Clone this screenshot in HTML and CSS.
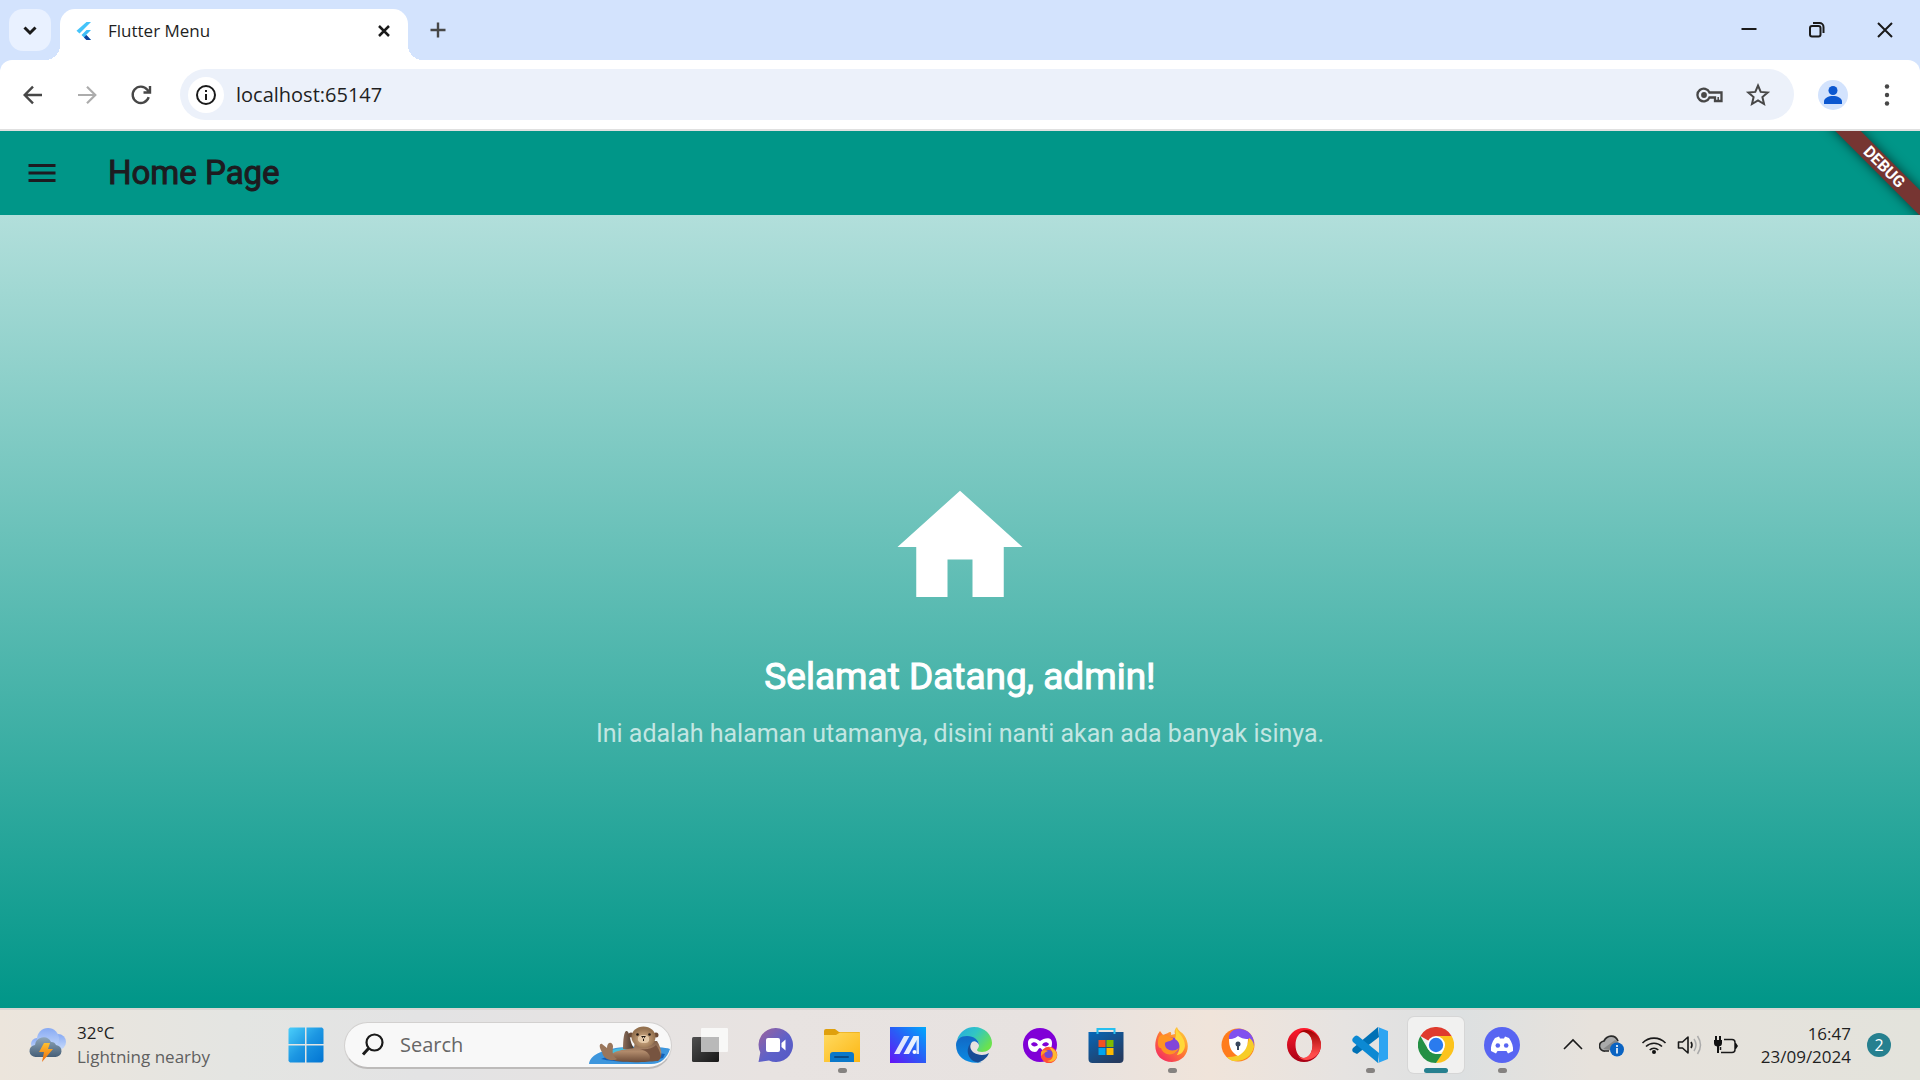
FILE: index.html
```html
<!DOCTYPE html>
<html lang="id">
<head>
<meta charset="utf-8">
<meta name="viewport" content="width=device-width, initial-scale=1">
<title>Flutter Menu</title>
<link rel="stylesheet" href="styles.css">
</head>
<body>
<header class="browser">
  <div class="tabstrip">
    <button class="tab-search" aria-label="Search tabs"><svg width="24" height="24" viewBox="0 0 24 24" class="line"><path d="M6.500 9.500l5.500 5.500 5.500-5.500" stroke-width="3"/></svg></button>
    <div class="tab">
      <svg width="18" height="20" viewBox="0 0 18 20"><path d="M11.500 1H16L4.500 12.500 1.500 9.800z" fill="#45c4fa"/><path d="M11.500 9H16l-5 5 5 5h-4.500l-5-5z" fill="#3fbcf5"/><path d="M9 16.500l2.500-2.500L16 19h-4.500z" fill="#0d3f9b"/></svg>
      <span class="tab-title">Flutter Menu</span>
      <button class="tab-close" aria-label="Close tab"><svg width="18" height="18" viewBox="0 0 18 18" class="line"><path d="M4 4l10 10M14 4L4 14" stroke-width="2.500"/></svg></button>
    </div>
    <button class="new-tab" aria-label="New tab"><svg width="20" height="20" viewBox="0 0 20 20" class="line soft"><path d="M10 2.500v15M2.500 10h15" stroke-width="2.400"/></svg></button>
    <div class="window-controls">
      <button aria-label="Minimize"><svg width="20" height="20" viewBox="0 0 20 20" class="line"><path d="M2.500 9h15" stroke-width="2"/></svg></button>
      <button aria-label="Restore"><svg width="20" height="20" viewBox="0 0 20 20" class="line"><rect x="3" y="6" width="10.500" height="10.500" rx="2" stroke-width="2"/><path d="M6 3h6.500a4 4 0 0 1 4 4v6" stroke-width="2"/></svg></button>
      <button aria-label="Close"><svg width="20" height="20" viewBox="0 0 20 20" class="line"><path d="M3 3l14 14M17 3L3 17" stroke-width="2"/></svg></button>
    </div>
  </div>
  <div class="toolbar">
    <button class="nav" aria-label="Back"><svg width="24" height="24" viewBox="0 0 24 24" class="line soft"><path d="M21 12H4.500M12 3.700L3.700 12l8.300 8.300" stroke-width="2.400"/></svg></button>
    <button class="nav" aria-label="Forward" disabled><svg width="24" height="24" viewBox="0 0 24 24" class="line faint"><path d="M3 12h16.500M12 3.700l8.300 8.300-8.300 8.300" stroke-width="2.200"/></svg></button>
    <button class="nav" aria-label="Reload"><svg width="24" height="24" viewBox="0 0 24 24" class="line soft"><path d="M19.700 14.200A8.200 8.200 0 1 1 18.300 6.700l2 2.500M21 3v6.500h-6.500" stroke-width="2.400"/></svg></button>
    <div class="omnibox">
      <button class="site-info" aria-label="Site information"><svg width="22" height="22" viewBox="0 0 22 22" class="line"><circle cx="11" cy="11" r="9" stroke-width="2"/><path d="M11 10v6M11 6v2" stroke-width="2"/></svg></button>
      <input class="address" type="text" value="localhost:65147" aria-label="Address">
      <button class="omni-btn" aria-label="Passwords"><svg width="30" height="20" viewBox="0 0 30 20" class="line soft"><path d="M14.500 7.500A6.300 6.300 0 1 0 14.500 12.500H20V16h6.500V7.500z" stroke-width="2.300"/><path d="M23.200 15v-3" stroke-width="1.500"/><circle cx="9" cy="10" r="2.900" class="dot"/></svg></button>
      <button class="omni-btn" aria-label="Bookmark"><svg width="26" height="26" viewBox="0 0 26 26" class="line soft"><path d="M13 3.500l2.700 6.400 7 .6-5.300 4.600 1.600 6.900-6-3.700-6 3.700 1.600-6.900L3.300 10.500l7-.6z" stroke-width="2" stroke-linejoin="miter"/></svg></button>
    </div>
    <button class="avatar" aria-label="Profile"><svg width="30" height="30" viewBox="0 0 30 30"><circle cx="15" cy="15" r="15" fill="#d3e3fd"/><circle cx="15" cy="10.500" r="4.500" fill="#0b57d0"/><path d="M6 24v-2.500c0-3.500 4.500-5.500 9-5.500s9 2 9 5.500V24z" fill="#0b57d0"/></svg></button>
    <button class="menu" aria-label="Browser menu"><svg width="24" height="24" viewBox="0 0 24 24" fill="#474747"><circle cx="12" cy="3.500" r="2.200"/><circle cx="12" cy="12" r="2.200"/><circle cx="12" cy="20.500" r="2.200"/></svg></button>
  </div>
</header>

<div class="appbar">
  <button class="drawer" aria-label="Open navigation menu"><svg width="36" height="36" viewBox="0 0 24 24" fill="#1d1b20"><path d="M3 18h18v-2H3zM3 13h18v-2H3zM3 6v2h18V6z"/></svg></button>
  <h1 class="appbar-title">Home Page</h1>
  <div class="banner"><span class="ribbon">DEBUG</span></div>
</div>
<main class="home">
  <svg class="home-icon" width="150" height="150" viewBox="0 0 24 24" fill="#fff"><path d="M10 20v-6h4v6h5v-8h3L12 3 2 12h3v8z"/></svg>
  <h2 class="welcome">Selamat Datang, admin!</h2>
  <p class="intro">Ini adalah halaman utamanya, disini nanti akan ada banyak isinya.</p>
</main>

<footer class="taskbar">
  <button class="weather">
    <svg width="38" height="36" viewBox="0 0 38 36">
      <defs><linearGradient id="cl" x2="0" y2="1"><stop stop-color="#88aaf3"/><stop offset="1" stop-color="#c9dcfb"/></linearGradient><linearGradient id="cd" x2="0" y2="1"><stop stop-color="#8fa6b8"/><stop offset="1" stop-color="#465f78"/></linearGradient><linearGradient id="bo" x2="0" y2="1"><stop stop-color="#ffc02e"/><stop offset="1" stop-color="#ee6a0c"/></linearGradient></defs>
      <circle cx="8" cy="17" r="6" fill="url(#cl)"/><circle cx="29" cy="15" r="8" fill="url(#cl)"/><circle cx="19" cy="12" r="11" fill="url(#cl)"/>
      <path d="M7 30a6 6 0 0 1-1-12 8.500 8.500 0 0 1 16-3 5 5 0 0 1 5 3 6 6 0 0 1-1 12z" fill="url(#cd)"/>
      <path d="M15 16h6l-2 6h5L13 35l2-10h-5z" fill="url(#bo)"/>
    </svg>
    <span class="weather-text"><span>32°C</span><span class="muted">Lightning nearby</span></span>
  </button>
  <nav class="apps">
    <button class="app" aria-label="Start"><svg width="36" height="36" viewBox="0 0 36 36"><defs><linearGradient id="wn" gradientUnits="userSpaceOnUse" x1="0" y1="0" x2="36" y2="36"><stop stop-color="#4cd0fb"/><stop offset=".5" stop-color="#1c96e2"/><stop offset="1" stop-color="#0173d2"/></linearGradient></defs><path d="M2 .5h15v16.500H.5V2zM18.500.5H34L35.500 2v15h-17zM.5 18.500H17v17H2L.5 34zM18.500 18.500h17V34L34 35.500H18.500z" fill="url(#wn)"/></svg></button>
    <label class="search">
      <svg width="24" height="24" viewBox="0 0 24 24" class="line"><circle cx="13.500" cy="9.500" r="8" stroke-width="2.200"/><path d="M7.500 15.500L2 21.500" stroke-width="3"/></svg>
      <input type="text" placeholder="Search" aria-label="Search">
      <svg width="82" height="40" viewBox="0 0 82 40">
        <defs><linearGradient id="fur" x2="0" y2="1"><stop stop-color="#7d5e49"/><stop offset=".5" stop-color="#b08a6b"/><stop offset="1" stop-color="#6d4c38"/></linearGradient><radialGradient id="hd" cy=".6"><stop stop-color="#d9b48e"/><stop offset="1" stop-color="#94714f"/></radialGradient><linearGradient id="arm"><stop stop-color="#8d6d58"/><stop offset="1" stop-color="#40332c"/></linearGradient></defs>
        <path d="M0 39C1 29 17 23 38 22c20-1 36 0 43 2-3 9-9 15-19 15z" fill="#3d96dd"/><path d="M16 27c10-4 22-5 34-4l-4 8H16z" fill="#46bfe0"/><path d="M12 34c15 4 48 3 62-1l2-4-14-2H30z" fill="#1260b8"/>
        <path d="M34 24c0-9 1-17 3-18 3-1 4 7 5 11s3 5 3 7l-3 1z" fill="url(#arm)"/>
        <path d="M45 23c-6 1-14 2-19 4-5 2-5 7 1 9 14 2 33 1 40 0 8-2 6-12 1-20H46z" fill="url(#fur)"/>
        <path d="M26 35c-8 1-12-3-13-8-3-4-3-9 0-8l5 4c0-6 5-7 6-2 0 4-2 9 4 13z" fill="#9a765b"/>
        <path d="M51 24c8 2 12 7 9 12h9c5-3 2-11-2-16-4 4-10 5-16 4z" fill="#775440"/>
        <circle cx="42" cy="10" r="2.500" fill="#6d4c38"/><circle cx="67" cy="10" r="2.500" fill="#6d4c38"/>
        <ellipse cx="54.500" cy="12" rx="12" ry="10.500" fill="url(#hd)"/><path d="M49 13c0-4 11-4 11 0 1 5-3 5-5.500 5S48 17 49 13z" fill="#e4c9a8"/><circle cx="48.500" cy="9.500" r="1.300" fill="#211812"/><circle cx="60.500" cy="9.500" r="1.300" fill="#211812"/><path d="M52 11h5l-2.500 3zM54 12v4h1v-4z" fill="#211812"/>
      </svg>
    </label>
    <button class="app" aria-label="Task view"><svg width="36" height="36" viewBox="0 0 36 36"><defs><linearGradient id="tk" x2="1" y2="1"><stop stop-color="#505050"/><stop offset="1" stop-color="#171717"/></linearGradient></defs><rect x="0" y="10" width="27" height="25" rx="1.500" fill="url(#tk)"/><rect x="9" y="1" width="27" height="24" rx="1" fill="#f9f9f9" fill-opacity=".9"/><path d="M9 10h18v15H9z" fill="#b9b9b9"/></svg></button>
    <button class="app" aria-label="Chat"><svg width="36" height="36" viewBox="0 0 36 36"><defs><linearGradient id="ch" x1="0" y1="0" x2="1" y2="1"><stop offset=".15" stop-color="#8d62a7"/><stop offset=".55" stop-color="#5d61c9"/><stop offset="1" stop-color="#5558c4"/></linearGradient></defs><path d="M18 1a17 17 0 1 1-7 32.500L.5 35l1.800-9.500A17 17 0 0 1 18 1z" fill="url(#ch)"/><rect x="8" y="11" width="14" height="14" rx="2" fill="#fff"/><path d="M23.500 16l4-3.500v11l-4-3.500z" fill="#fff"/></svg></button>
    <button class="app open" aria-label="File Explorer"><svg width="36" height="36" viewBox="0 0 36 36"><defs><linearGradient id="fo" x2="1" y2="1"><stop stop-color="#ffda61"/><stop offset="1" stop-color="#fcb714"/></linearGradient></defs><path d="M0 4a2 2 0 0 1 2-2h9l4 3h20a1 1 0 0 1 1 1v6H0z" fill="#dfa00d"/><path d="M0 8h12l4-2.500h20V35H0z" fill="url(#fo)"/><path d="M6 35v-7a3 3 0 0 1 3-3h18a3 3 0 0 1 3 3v7z" fill="#0a78ca"/><rect x="10" y="29" width="15" height="2" rx="1" fill="#084b87"/></svg></button>
    <button class="app" aria-label="MyASUS"><svg width="36" height="36" viewBox="0 0 36 36"><defs><linearGradient id="as" x1="0" y1="1" x2="1" y2="0"><stop stop-color="#6612f5"/><stop offset=".5" stop-color="#2a5cf6"/><stop offset="1" stop-color="#00a9fb"/></linearGradient></defs><path d="M0 0h36v36H0z" fill="url(#as)"/><g fill="#fff"><path d="M14 9h5.500L9.500 27H4z" opacity=".85"/><path d="M23.500 9H29L19 27h-5.500z" opacity=".9"/><path d="M26.500 12L29 9v18h-2.500z" opacity=".8"/><circle cx="24.500" cy="25" r="2"/></g></svg></button>
    <button class="app" aria-label="Edge"><svg width="36" height="36" viewBox="0 0 36 36"><defs><linearGradient id="e1" x2="1" y2=".6"><stop stop-color="#25a9e3"/><stop offset=".5" stop-color="#32c6c3"/><stop offset="1" stop-color="#6be24d"/></linearGradient><linearGradient id="e2" x2="0" y2="1"><stop stop-color="#1268c4"/><stop offset="1" stop-color="#0a8be3"/></linearGradient></defs><path d="M1 13C4 4 11 0 18 0c11 0 18 8 18 16 0 6-5 9-10 9-3 0-5-1-5-2 0-1 2-2 2-5 0-5-5-8-11-8-5 0-9 1-11 3z" fill="url(#e1)"/><path d="M0 18C0 12 5 9 11 9c7 0 12 4 12 9-2-4-5-4.500-7-3-5 4-3 17 10 20C14 38 0 32 0 18z" fill="url(#e2)"/><path d="M16 15c-3 3-3 12 10 13 3 0 5-1 7-2-2 5-6 8-11 9.500C12 34 8 22 16 15z" fill="#164d96"/></svg></button>
    <button class="app" aria-label="Firefox Private Browsing"><svg width="36" height="36" viewBox="0 0 36 36"><circle cx="18" cy="18" r="17" fill="#8000d7"/><path d="M6 16c0-7 8-5 12-2 4-3 12-5 12 2 0 6-3 9-7 9-3 0-3-4-5-4s-2 4-5 4c-4 0-7-3-7-9z" fill="#fff"/><path d="M9 17c2-3 6-2 7 1-2 2-6 2-7-1zM20 18c1-3 5-4 7-1-1 3-5 3-7 1z" fill="#8000d7"/><circle cx="27" cy="28" r="8.300" fill="#ff5038"/><path d="M27 20c4 1 8 4 8 8 0 6-6 8-10 6 7-1 8-7 2-14z" fill="#ffb82f"/><circle cx="26.500" cy="27" r="4" fill="#7349d6"/><path d="M19 25c3-3 5-1 7-1-3 1-5 3-7 5z" fill="#ff9b25"/></svg></button>
    <button class="app" aria-label="Microsoft Store"><svg width="36" height="36" viewBox="0 0 36 36"><defs><linearGradient id="st" x2=".7" y2="1"><stop stop-color="#0767b8"/><stop offset="1" stop-color="#253b60"/></linearGradient></defs><path d="M.5 5h35v27a4 4 0 0 1-4 4h-27a4 4 0 0 1-4-4z" fill="url(#st)"/><path d="M9.500 7V2h17v5" fill="none" stroke="#27bfef" stroke-width="2"/><path d="M10.500 13h7v7h-7z" fill="#f25022"/><path d="M18.500 13h7v7h-7z" fill="#7fba00"/><path d="M10.500 21h7v7h-7z" fill="#00a4ef"/><path d="M18.500 21h7v7h-7z" fill="#ffb900"/></svg></button>
    <button class="app open" aria-label="Firefox"><svg width="36" height="36" viewBox="0 0 36 36"><defs><linearGradient id="ff" x1="1" y1="0" x2=".2" y2="1"><stop stop-color="#ffe23e"/><stop offset=".5" stop-color="#ff7e30"/><stop offset="1" stop-color="#f42b62"/></linearGradient></defs><path d="M4 7l2-3 3 4 5-2c1-1 4-2 3 2l4-1c-1-3 0-5 2-7 1 4 5 5 7 8 8 11 3 26-12 27C4 35-3 22 4 7z" fill="url(#ff)"/><circle cx="18" cy="18.500" r="8" fill="#8245d8"/><path d="M5 10c4-5 8 0 14 1 1 3-6 3-8 5-1 7 8 10 14 5-3 8-15 9-18 0-3 1-4-6-2-11z" fill="#ff9322"/><path d="M22 1c2 5 9 9 9 18-1 7-6 9-8 9 5-8 2-14-2-16 2-5 0-8 1-11z" fill="#ffd83a"/></svg></button>
    <button class="app" aria-label="Secure Browser"><svg width="36" height="36" viewBox="0 0 36 36"><circle cx="18" cy="18" r="16.500" fill="#ff7c1c"/><path d="M9 12C8 5 15 1 21 2c9 1 14 9 13 18l-5-8z" fill="#8050ef"/><path d="M29 11c4 2 5 6 5 9-2 9-10 15-20 14-3 0-5-2-7-4 9 1 20-4 22-19z" fill="#f7cd28"/><path d="M9 12c6 0 7-2 9-3 3 2 5 3 10 3 0 8-3 13-10 17C11 25 9 20 9 12z" fill="#fff"/><circle cx="18" cy="17" r="2.500" fill="#39465c"/><path d="M17 17h2v6h-2z" fill="#39465c"/></svg></button>
    <button class="app" aria-label="Opera"><svg width="36" height="36" viewBox="0 0 36 36"><defs><linearGradient id="op" x2="0" y2="1"><stop stop-color="#ff1b2d"/><stop offset="1" stop-color="#a70014"/></linearGradient><linearGradient id="oq" x2="0" y2="1"><stop stop-color="#9c0000"/><stop offset=".8" stop-color="#ff4b4b"/></linearGradient></defs><path d="M18 1a17 17 0 1 0 0 34 17 17 0 0 0 0-34zm0 4c5 0 8.500 6 8.500 13S23 31 18 31 9.500 25 9.500 18 13 5 18 5z" fill="url(#op)" fill-rule="evenodd"/><path d="M12 7c3-4 8-5 13-3 6 3 10 8 10 14s-4 12-10 14c-5 2-10 1-13-3 6 5 14.500 0 14.500-11S18 2 12 7z" fill="url(#oq)"/></svg></button>
    <button class="app open" aria-label="Visual Studio Code"><svg width="36" height="36" viewBox="0 0 36 36"><path d="M26 0l1 10L5 27l-4-2c-1-1-1-3 0-4z" fill="#0071b5"/><path d="M1 15c-1-1-1-3 0-4l2-2c1-.7 2-.7 3 0l21 17-1 10z" fill="#0c89d3"/><path d="M26 0l10 4v28l-10 4c1-1 1-2 1-3V3c0-1 0-2-1-3z" fill="#2da5f2"/></svg></button>
    <button class="app open active" aria-label="Chrome"><svg width="36" height="36" viewBox="0 0 36 36"><path d="M18 18L2.400 9a18 18 0 0 1 31.200 0z" fill="#df3b2e"/><path d="M18 9h15.600A18 18 0 0 1 18 36l8-13.500z" fill="#fcc31c"/><path d="M2.400 9l7.800 13.500 7.800 4.500h6L18 36A18 18 0 0 1 2.400 9z" fill="#249044"/><circle cx="18" cy="18" r="9" fill="#fff"/><circle cx="18" cy="18" r="7.200" fill="#2a7bee"/></svg></button>
    <button class="app open" aria-label="Discord"><svg width="36" height="36" viewBox="0 0 36 36"><circle cx="18" cy="18" r="18" fill="#5865f2"/><path d="M11 11l4-1.500 1 2h4l1-2L25 11c3 4 4.500 9 4 13l-5 2.500-1.500-2.500h-9L12 26.500 7 24c-.5-5 1-9 4-13z" fill="#fff"/><circle cx="13.800" cy="18.500" r="2.300" fill="#5865f2"/><circle cx="22.200" cy="18.500" r="2.300" fill="#5865f2"/></svg></button>
  </nav>
  <div class="tray">
    <button aria-label="Show hidden icons"><svg width="20" height="20" viewBox="0 0 20 20" class="line"><path d="M1 14l9-9 9 9" stroke-width="1.600"/></svg></button>
    <div class="tray-group">
      <button aria-label="OneDrive"><svg width="26" height="24" viewBox="0 0 26 24"><path d="M10 18H6A5 5 0 0 1 5 8C8 2 16 1 19 8" fill="#aaa" stroke="#292929" stroke-width="1.700"/><path d="M4 16L16 7l4 2-8 8z" fill="#888"/><circle cx="18" cy="16.500" r="7" fill="#0a63c2"/><path d="M17.200 15h1.600v5.500h-1.600zM17.200 12h1.600v2h-1.600z" fill="#fff"/></svg></button>
    </div>
    <div class="tray-group">
      <button aria-label="Wi-Fi"><svg width="26" height="20" viewBox="0 0 26 20" class="line"><path d="M1.500 8a16 16 0 0 1 23 0M5 11.500a11.300 11.300 0 0 1 16 0M8.700 15a6.100 6.100 0 0 1 8.600 0" stroke-width="1.600"/><circle cx="13" cy="17" r="2" fill="#111" stroke="none"/></svg></button>
      <button aria-label="Volume"><svg width="26" height="20" viewBox="0 0 26 20" class="line"><path d="M1.500 7h4L11 2v16l-5.500-5h-4zM14 7q2 3 0 6" stroke-width="1.600" stroke-linejoin="round"/><path d="M17 4q4 6 0 12M20.500 1q6 9 0 18" stroke="#aaa" stroke-width="1.500"/></svg></button>
      <button aria-label="Battery"><svg width="26" height="20" viewBox="0 0 26 20" class="line"><path d="M11 4.500h8a3 3 0 0 1 3 3v7a3 3 0 0 1-3 3H8M7.500 12v3" stroke-width="1.500"/><path d="M1 5h8v3q0 3-3 3.500V18H4v-6.500Q1 11 1 8zM2 1h2v4H2zM6 1h2v4H6zM22 8h1l2 3-2 3h-1z" fill="#111" stroke="none"/></svg></button>
    </div>
    <button class="clock"><span>16:47</span><span>23/09/2024</span></button>
    <button class="badge" aria-label="2 notifications">2</button>
  </div>
</footer>
</body>
</html>
```
FILE: styles.css
```css
* { box-sizing: border-box; }
html { height: 100%; }
body {
  margin: 0;
  min-height: 100vh;
  display: flex;
  flex-direction: column;
  font-family: "Open Sans", "Noto Sans", sans-serif;
  color: #1f1f1f;
}
button, input { font: inherit; color: inherit; border: 0; background: none; padding: 0; outline: 0; }
button { display: flex; align-items: center; justify-content: center; flex: none; }
svg { display: block; flex: none; }
.line { fill: none; stroke: #1a1a1a; }
.line.soft { stroke: #474747; }
.line.faint { stroke: #acacac; }
.dot { fill: #474747; stroke: none; }

/* Browser chrome */
.browser { background: #d3e3fd; }
.tabstrip { display: flex; align-items: center; height: 60px; padding: 0 12px 0 9px; }
.tab-search { width: 42px; height: 42px; border-radius: 14px; background: #e9f1ff; }
.tab {
  position: relative;
  display: flex;
  align-items: center;
  align-self: flex-end;
  width: 348px;
  height: 51px;
  margin-left: 9px;
  padding: 0 15px 8px 15px;
  border-radius: 15px 15px 0 0;
  background: #fff;
}
.tab::before, .tab::after {
  content: "";
  position: absolute;
  bottom: 0;
  width: 15px;
  height: 15px;
  background: radial-gradient(circle at 0 0, transparent 15px, #fff 15px);
}
.tab::before { right: 100%; }
.tab::after { left: 100%; background: radial-gradient(circle at 100% 0, transparent 15px, #fff 15px); }
.tab-title { flex: 1; margin-left: 15px; font-size: 17px; line-height: 24px; }
.tab-close { width: 18px; height: 18px; }
.new-tab { width: 42px; height: 42px; margin-left: 9px; }
.window-controls { display: flex; margin-left: auto; }
.window-controls button { width: 46px; height: 40px; margin-left: 22px; }
.toolbar {
  display: flex;
  align-items: center;
  height: 71px;
  padding: 0 12px;
  border-bottom: 2px solid #e0e0e0;
  border-radius: 12px 12px 0 0;
  background: #fff;
}
.nav { width: 42px; height: 42px; margin-right: 12px; }
.omnibox {
  display: flex;
  flex: 1;
  align-items: center;
  height: 51px;
  margin: 0 24px 0 6px;
  padding: 0 18px 0 8px;
  border-radius: 26px;
  background: #ecf1fa;
}
.site-info { width: 36px; height: 36px; border-radius: 50%; background: #fff; }
.address { flex: 1; min-width: 0; margin-left: 12px; font-size: 20px; line-height: 28px; }
.omni-btn { width: 36px; height: 36px; margin-left: 12px; }
.menu { width: 42px; height: 42px; margin-left: 18px; }

/* Flutter page */
.appbar {
  position: relative;
  display: flex;
  align-items: center;
  height: 84px;
  padding: 0 24px;
  overflow: hidden;
  background: #009688;
  color: #1d1b20;
  font-family: Roboto, sans-serif;
}
.appbar-title {
  margin: 0 0 0 48px;
  font-size: 33px;
  line-height: 42px;
  font-weight: 400;
  -webkit-text-stroke: 1px currentColor;
}
.banner { position: absolute; top: 0; right: 0; width: 84px; height: 84px; }
.ribbon {
  position: absolute;
  top: 27px;
  left: -22px;
  width: 140px;
  height: 18px;
  transform: rotate(45deg);
  background: #763532;
  box-shadow: 0 0 12px rgba(0, 0, 0, .6);
  color: #fff;
  font-size: 16px;
  line-height: 18px;
  font-weight: 700;
  text-align: center;
}
.home {
  display: flex;
  flex: 1;
  flex-direction: column;
  align-items: center;
  justify-content: center;
  background: linear-gradient(#b2dfdb, #009688);
  font-family: Roboto, sans-serif;
}
.welcome {
  margin: 30px 0 15px;
  color: #fff;
  font-size: 37px;
  line-height: 50px;
  font-weight: 400;
  -webkit-text-stroke: 1px currentColor;
}
.intro { margin: 0; color: rgba(255, 255, 255, .7); font-size: 25px; line-height: 34px; }

/* Taskbar */
.taskbar {
  display: flex;
  align-items: center;
  height: 72px;
  padding: 0 29px;
  border-top: 2px solid #d8d6d3;
  background: linear-gradient(90deg, #ece5dc, #e4e5e2 12%, #e3e3e4 22%, #e8e3e1 40%, #e7e2e0 55%, #f0e4da 63%, #e6e3e1 70%, #dde0e1 76%, #e7e2dc 83%, #e3e3dc);
}
.weather { width: 249px; justify-content: flex-start; gap: 10px; }
.weather-text { display: flex; flex-direction: column; align-items: flex-start; font-size: 17px; line-height: 24px; }
.muted { color: #5f5f5f; }
.apps { display: flex; align-items: center; gap: 10px; }
.app { position: relative; width: 56px; height: 56px; border-radius: 6px; }
.app.active { background: #f1f1f0; box-shadow: 0 0 0 1px #d6d6d6; }
.app.open::after {
  content: "";
  position: absolute;
  bottom: 0;
  left: 24px;
  width: 9px;
  height: 5px;
  border-radius: 3px;
  background: #858280;
}
.app.active::after { left: 16px; width: 24px; background: #26808f; }
.search {
  display: flex;
  align-items: center;
  width: 328px;
  height: 47px;
  padding: 0 0 0 16px;
  border: 1px solid #d2d0cf;
  border-bottom: 2px solid #bdbbba;
  border-radius: 24px;
  background: #f8f8f8;
  overflow: hidden;
}
.search input { flex: 1; min-width: 0; margin-left: 15px; font-size: 20px; line-height: 28px; }
.search input::placeholder { color: #666; opacity: 1; }
.tray { display: flex; align-items: center; gap: 16px; margin-left: auto; }
.tray-group { display: flex; align-items: center; gap: 10px; }
.clock { flex-direction: column; align-items: flex-end; margin-left: 6px; font-size: 17px; line-height: 23px; }
.badge { width: 24px; height: 24px; border-radius: 50%; background: #26808f; color: #fff; font-size: 16px; }
```
